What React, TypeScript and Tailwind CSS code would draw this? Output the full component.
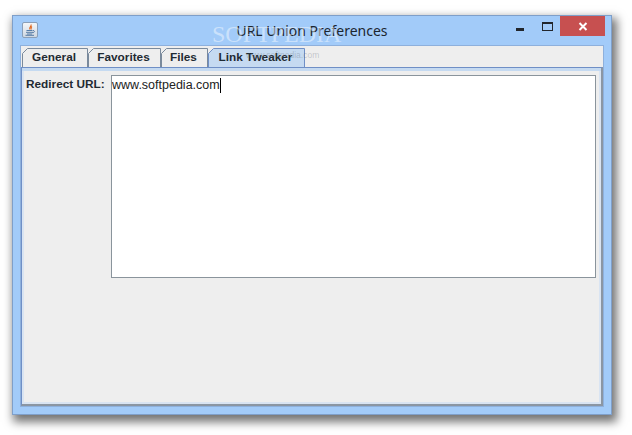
const font = { fontFamily: '"Liberation Sans", Arial, sans-serif' };

function Tab({ label, width, active }: { label: string; width: number; active?: boolean }) {
  const d = `M0.5 19 V5.5 L5.5 0.5 H${width - 0.5} V19`;
  return (
    <div className="relative h-[19px] flex items-center justify-center text-[11.8px] font-bold text-[#1f2a33] pr-[2px] pt-[1px]" style={{ width }}>
      <svg className="absolute inset-0" width={width} height={19}>
        <path d={d} fill={active ? "#c5daf1" : "#eeeeee"} stroke={active ? "#6f8fc6" : "#7a8a9c"} />
      </svg>
      <span className="relative">{label}</span>
    </div>
  );
}

function JavaIcon() {
  return (
    <div className="w-[16px] h-[16px] rounded-[2px] border border-[#8a9fb8] bg-gradient-to-b from-[#f4f6f8] to-[#cfd8e2] flex items-center justify-center">
      <svg width="12" height="12" viewBox="0 0 12 12" fill="none">
        <path d="M7 0.5 C8 2.5 4.5 3 6 5.5 M8 2.5 C6.5 3.5 7.5 4.5 7 5.5" stroke="#e0651c" strokeWidth="1.1" />
        <path d="M2.5 6.5 H8.5 M2 8.3 H9 M3 10 H8 M1.5 11.3 H10 M9 6.5 C11 6.5 11 8.5 8.5 8.8" stroke="#47709e" strokeWidth="0.9" />
      </svg>
    </div>
  );
}

export default function App() {
  return (
    <div className="w-[632px] h-[435px] bg-white pl-[12px] pt-[15px] overflow-hidden" style={font}>
      <div className="relative w-[600px] h-[400px] flex flex-col bg-[#a2cbf9] border border-[#7f9fc9] shadow-[3px_5px_9px_2px_rgba(0,0,0,0.55)]">
        {/* title bar */}
        <div className="relative h-[29px] shrink-0 flex items-center justify-center">
          <div className="absolute left-[9px] top-[6px]"><JavaIcon /></div>
          <span className="text-[14px] text-[#1c2630]" style={{ fontFamily: '"Noto Sans", sans-serif' }}>URL Union Preferences</span>
          <span className="absolute left-[199px] top-0 text-[24px] text-white/45" style={{ fontFamily: '"Liberation Serif", serif' }}>SOFTPEDIA</span>
          <div className="absolute right-[6px] top-0 flex items-start">
            <div className="w-[8px] h-[3px] bg-[#22262c] mt-[12px] mr-[18px]" />
            <div className="w-[11px] h-[9px] border border-[#22262c] border-t-2 mt-[6px] mr-[7px]" />
            <div className="w-[45px] h-[20px] bg-[#c75050] flex items-center justify-center">
              <svg width="10" height="9" viewBox="0 0 10 9"><path d="M1.5 1 L8.5 8 M8.5 1 L1.5 8" stroke="#fff" strokeWidth="2" /></svg>
            </div>
          </div>
        </div>
        {/* client */}
        <div className="mx-[7px] flex-1 flex flex-col bg-[#eeeeee] border border-[#8eb0dc] mb-[7px] min-h-0 relative">
          <div className="flex items-end h-[21px] pl-[1px] shrink-0">
            <Tab label="General" width={66} />
            <Tab label="Favorites" width={73} />
            <Tab label="Files" width={47} />
            <Tab label="Link Tweaker" width={97} active />
          </div>
          <span className="absolute left-[225px] top-[3px] text-[8.5px] leading-[12px] text-[#5b6670]/30">www.softpedia.com</span>
          <div className="flex-1 border-t border-l border-[#6f8fc6] border-r-2 border-r-[#8b96a3] border-b-2 border-b-[#8b96a3] flex flex-col min-h-0">
            <div className="h-[3px] shrink-0 bg-[#c5daf1]" />
            <div className="flex-1 flex flex-col border-l-[2px] border-r-[2px] border-b-[2px] border-[#d9e4f2] pl-[2px] pr-[3px] pt-[4px] min-h-0">
              <div className="flex items-start gap-[7px]">
                <label className="text-[11.8px] font-bold text-[#1f2a33] leading-[14px] mt-[2px] w-[78px] whitespace-nowrap">Redirect URL:</label>
                <div className="flex-1 h-[203px] bg-white border border-[#8a949c] text-[12.5px] leading-[14px] text-[#222] pt-[2px] flex items-start">
                  <span>www.softpedia.com</span>
                  <span className="w-px h-[15px] bg-black" />
                </div>
              </div>
            </div>
          </div>
        </div>
      </div>
    </div>
  );
}
